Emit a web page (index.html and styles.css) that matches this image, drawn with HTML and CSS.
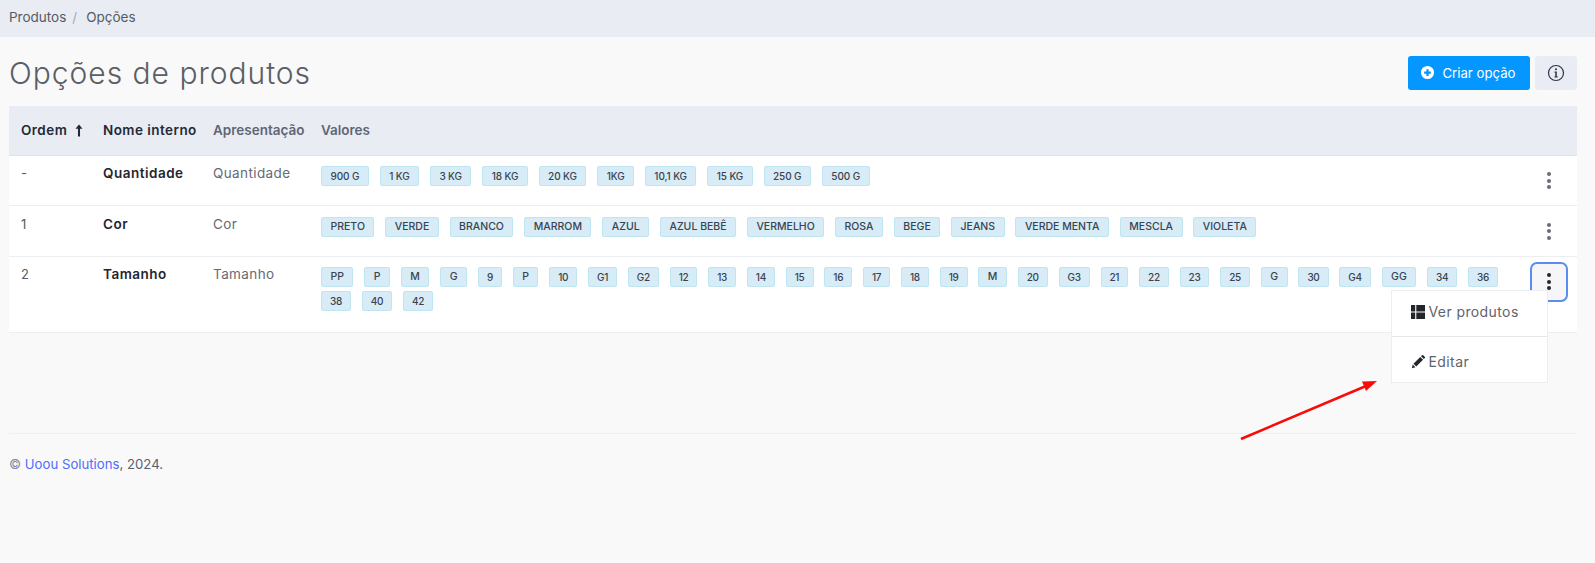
FILE: index.html
```html
<!DOCTYPE html>
<html lang="pt">
<head>
<meta charset="utf-8">
<title>Opções de produtos</title>
<link rel="stylesheet" href="styles.css">
</head>
<body>
<nav class="crumbs"><a>Produtos</a><span class="sep">/</span><span>Opções</span></nav>
<main class="main">
  <header class="head">
    <h1>Opções de produtos</h1>
    <div class="head-actions">
      <button class="btn-primary"><svg class="plus" viewBox="0 0 16 16"><path fill="#fff" fill-rule="evenodd" d="M8 1a7 7 0 1 0 0 14A7 7 0 0 0 8 1zm-1.200 3.400h2.400v2.400h2.400v2.400H9.200v2.400H6.800V9.200H4.400V6.800h2.400z"/></svg>Criar opção</button>
      <button class="btn-info"><svg viewBox="0 0 18 18"><circle cx="9" cy="9" r="7.500" fill="none" stroke="#2a3547" stroke-width="1.200"/><rect x="8.300" y="7.600" width="1.500" height="5.600" fill="#2a3547"/><rect x="7.400" y="7.600" width="1.600" height="1" fill="#2a3547"/><rect x="7.400" y="12.400" width="3.400" height="1" fill="#2a3547"/><circle cx="9" cy="5.300" r="1" fill="#2a3547"/></svg></button>
    </div>
  </header>
  <table class="grid">
    <colgroup><col class="c1"><col class="c2"><col class="c3"><col><col class="c5"></colgroup>
    <thead>
      <tr>
        <th class="dark">Ordem <svg class="up" viewBox="0 0 10 14"><path d="M5 .5 1.200 5h2.700v8.500h2.200V5h2.700z" fill="#1f2937"/></svg></th>
        <th class="dark">Nome interno</th>
        <th>Apresentação</th>
        <th>Valores</th>
        <th></th>
      </tr>
    </thead>
    <tbody>
      <tr>
        <td>-</td>
        <td class="name">Quantidade</td>
        <td class="pres">Quantidade</td>
        <td class="vals"><div class="tags"><span class="tag qty">900 G</span><span class="tag qty">1 KG</span><span class="tag qty">3 KG</span><span class="tag qty">18 KG</span><span class="tag qty">20 KG</span><span class="tag qty">1KG</span><span class="tag qty">10,1 KG</span><span class="tag qty">15 KG</span><span class="tag qty">250 G</span><span class="tag qty">500 G</span></div></td>
        <td class="act"><button class="kebab"><i></i><i></i><i></i></button></td>
      </tr>
      <tr>
        <td>1</td>
        <td class="name">Cor</td>
        <td class="pres">Cor</td>
        <td class="vals"><div class="tags"><span class="tag">PRETO</span><span class="tag">VERDE</span><span class="tag">BRANCO</span><span class="tag">MARROM</span><span class="tag">AZUL</span><span class="tag">AZUL BEBÊ</span><span class="tag">VERMELHO</span><span class="tag">ROSA</span><span class="tag">BEGE</span><span class="tag">JEANS</span><span class="tag">VERDE MENTA</span><span class="tag">MESCLA</span><span class="tag">VIOLETA</span></div></td>
        <td class="act"><button class="kebab"><i></i><i></i><i></i></button></td>
      </tr>
      <tr>
        <td>2</td>
        <td class="name">Tamanho</td>
        <td class="pres">Tamanho</td>
        <td class="vals"><div class="tags"><span class="tag">PP</span><span class="tag">P</span><span class="tag">M</span><span class="tag">G</span><span class="tag num">9</span><span class="tag">P</span><span class="tag num">10</span><span class="tag num">G1</span><span class="tag num">G2</span><span class="tag num">12</span><span class="tag num">13</span><span class="tag num">14</span><span class="tag num">15</span><span class="tag num">16</span><span class="tag num">17</span><span class="tag num">18</span><span class="tag num">19</span><span class="tag">M</span><span class="tag num">20</span><span class="tag num">G3</span><span class="tag num">21</span><span class="tag num">22</span><span class="tag num">23</span><span class="tag num">25</span><span class="tag">G</span><span class="tag num">30</span><span class="tag num">G4</span><span class="tag">GG</span><span class="tag num">34</span><span class="tag num">36</span><span class="tag num">38</span><span class="tag num">40</span><span class="tag num">42</span></div></td>
        <td class="act">
          <div class="menu-wrap">
            <button class="kebab focused"><i></i><i></i><i></i></button>
            <div class="menu">
              <a class="menu-item"><svg viewBox="0 0 14 14"><path fill="#22252b" d="M0 0h4.200v6.400H0zM0 7.600h4.200V14H0zM5.300 0H14v6.400H5.300zM5.300 7.600H14V14H5.300z"/></svg>Ver produtos</a>
              <a class="menu-item"><svg viewBox="0 0 16 16"><path fill="#22252b" d="M1 15l.9-4.100 3.200 3.200zM2.800 10 10.600 2.200l3.200 3.200L6 13.200zM11.500 1.300l1-1a1 1 0 0 1 1.400 0l1.800 1.800a1 1 0 0 1 0 1.400l-1 1z"/></svg>Editar</a>
            </div>
          </div>
        </td>
      </tr>
    </tbody>
  </table>
  <footer class="foot"><span class="copy">©</span> <a>Uoou Solutions</a>, 2024.</footer>
</main>
<svg class="arrow" viewBox="0 0 1595 563"><path d="M1241 439 1366 386" stroke="#fa0b0b" stroke-width="2.600" fill="none"/><path d="M1377 381 1362 381.500 1366 391z" fill="#fa0b0b"/></svg>
</body>
</html>
```
FILE: styles.css
```css
* { box-sizing: border-box; }
html, body { margin: 0; height: 100%; }
body {
  background: #f9f9fa;
  color: #2f3540;
  font-family: Inter, "Noto Sans", sans-serif;
  font-size: 13px;
  position: relative;
  overflow: hidden;
}
.crumbs {
  height: 37px;
  background: #e9ecf3;
  padding: 0 9px 3px;
  display: flex;
  align-items: center;
  color: #555b66;
  font-size: 13.500px;
}
.crumbs .sep { color: #a4a9b2; margin: 0 9px 0 6px; }
.main { padding: 0 18px 0 9px; }
.head {
  display: flex;
  justify-content: space-between;
  align-items: center;
  height: 69px;
  padding-top: 2px;
}
h1 {
  margin: 0;
  font-weight: 300;
  font-size: 30px;
  color: #5a5f66;
  letter-spacing: 0.980px;
}
.head-actions { display: flex; gap: 5px; }
button { font-family: inherit; border: 0; padding: 0; cursor: pointer; }
.btn-primary {
  width: 122px;
  height: 34px;
  background: #0497ff;
  border-radius: 3px;
  color: #fff;
  font-size: 13.200px;
  display: flex;
  align-items: center;
  justify-content: center;
  gap: 7px;
  padding-right: 2px;
}
.plus { width: 15px; height: 15px; }
.btn-info {
  width: 42px;
  height: 34px;
  background: #e9ecf3;
  border-radius: 3px;
  display: flex;
  align-items: center;
  justify-content: center;
}
.btn-info svg { width: 18px; height: 18px; }
.grid {
  width: 100%;
  border-collapse: collapse;
  table-layout: fixed;
  background: #fff;
}
.c1 { width: 82px; }
.c2 { width: 110px; }
.c3 { width: 108px; }
.c5 { width: 58px; }
th {
  height: 49px;
  background: #e9ecf3;
  text-align: left;
  padding: 0 12px;
  font-weight: 600;
  font-size: 13.500px;
  color: #5f6675;
  border-bottom: 1px solid #dfe1e6;
  white-space: nowrap;
}
th.dark { color: #222a36; letter-spacing: 0.450px; }
.up { width: 10px; height: 13px; vertical-align: -2px; margin-left: 3px; }
td {
  padding: 9.500px 12px 0;
  vertical-align: top;
  border-bottom: 1px solid #eceef1;
  height: 50.500px;
  line-height: 17px;
  color: #555b66;
}
tbody tr:last-child td { height: 76px; }
td.vals { padding-top: 10.500px; }
td.name { font-weight: 600; color: #1f2530; font-size: 13.500px; letter-spacing: 0.500px; }
td.pres { font-weight: 400; color: #666b75; font-size: 13.500px; letter-spacing: 0.400px; }
.tags { display: flex; flex-wrap: wrap; column-gap: 10.800px; row-gap: 4px; }
.tag {
  height: 20px;
  padding: 0 8.500px;
  background: #d7ecf6;
  border: 1px solid #bfe5f0;
  border-radius: 2px;
  color: #3a4350;
  font-size: 10.500px;
  font-weight: 500;
  line-height: 18px;
  white-space: nowrap;
}
.tag.num { padding: 0 8px; font-size: 10px; letter-spacing: -0.300px; }
.tag.qty { padding: 0 8.500px; font-size: 10px; letter-spacing: -0.100px; }
td.act { padding: 0; position: relative; }
.menu-wrap { position: relative; }
.kebab {
  position: absolute;
  top: 5px;
  left: 11px;
  width: 38px;
  height: 40px;
  background: transparent;
  display: flex;
  flex-direction: column;
  align-items: center;
  justify-content: center;
  gap: 2.500px;
  border-radius: 7px;
  border: 2px solid transparent;
}
.kebab i { width: 4px; height: 4px; border-radius: 50%; background: #6b6b7a; display: block; }
.kebab.focused { border-color: #5b8def; background: #f6f6f8; }
.kebab.focused i { background: #23262d; }
.menu {
  position: absolute;
  top: 33px;
  right: 29.500px;
  width: 157px;
  background: #fff;
  border: 1px solid #eceef1;
  z-index: 2;
}
.menu-item {
  display: flex;
  align-items: center;
  height: 45.500px;
  padding: 0 0 3px 19px;
  font-size: 14px;
  color: #5f636b;
  gap: 4px;
  letter-spacing: 0.400px;
}
.menu-item + .menu-item { border-top: 1px solid #e4e6ea; padding: 5px 0 0 19px; }
.menu-item svg { width: 14px; height: 14px; flex: none; }
.foot {
  margin-top: 100.500px;
  border-top: 1px solid #eeeff1;
  padding-top: 22px;
  font-size: 13.200px;
  color: #5b606a;
}
.foot a { color: #4f6ef7; }
.foot .copy { color: #7f8ba8; }
.arrow { position: absolute; left: 0; top: 0; width: 1595px; height: 563px; pointer-events: none; z-index: 3; }
```
